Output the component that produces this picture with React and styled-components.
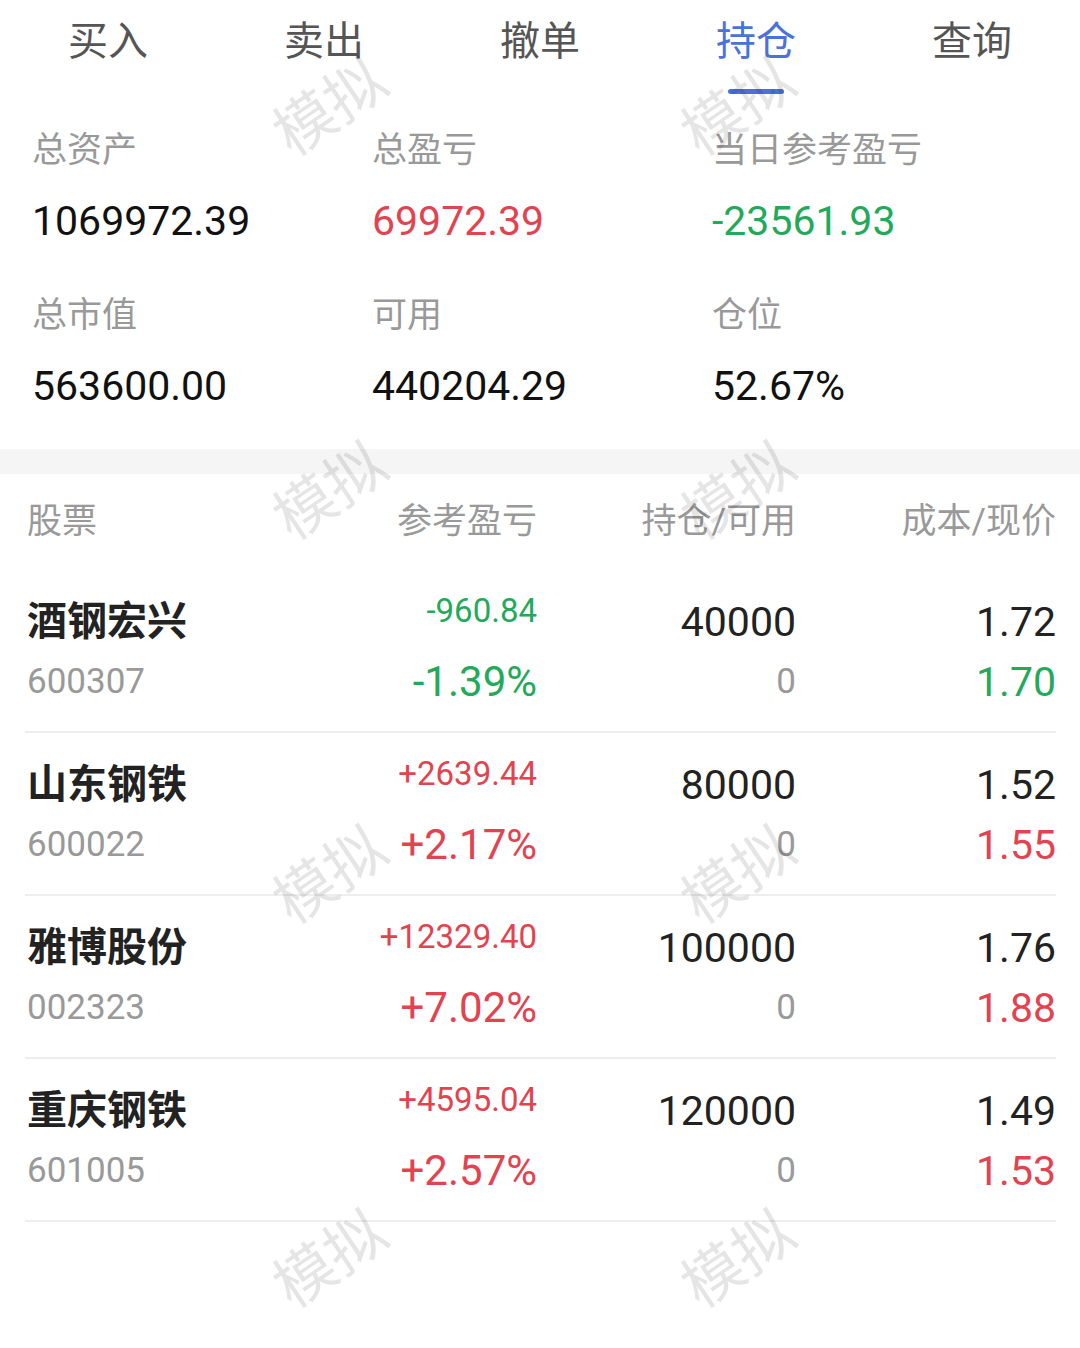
import React from "react";
import styled, { createGlobalStyle } from "styled-components";

const GlobalStyle = createGlobalStyle`
  body {
    margin: 0;
    background: #fff;
    font-family: Roboto, "Noto Sans CJK SC", sans-serif;
  }
`;

const RED = "#e2434f";
const GREEN = "#22a95a";
const BLUE = "#4a72d8";

const Page = styled.div`
  position: relative;
  width: 1080px;
  min-height: 1348px;
  overflow: hidden;
  background: #fff;
`;

const TabBar = styled.div`
  display: grid;
  grid-template-columns: repeat(5, 1fr);
  height: 100px;
`;

const Tab = styled.div`
  display: flex;
  flex-direction: column;
  align-items: center;
  padding-top: 18px;
  font-size: 40px;
  line-height: 48px;
  color: ${(p) => (p.active ? BLUE : "#555")};
`;

const Underline = styled.div`
  width: 56px;
  height: 5px;
  margin-top: 23px;
  border-radius: 3px;
  background: ${BLUE};
`;

const Summary = styled.div`
  display: grid;
  grid-template-columns: repeat(3, 340px);
  row-gap: 50px;
  padding: 31px 0 38px 32px;
`;

const Cell = styled.div`
  display: flex;
  flex-direction: column;
`;

const Label = styled.div`
  font-size: 35px;
  line-height: 40px;
  color: #999;
`;

const Value = styled.div`
  margin-top: 25px;
  font-size: 41px;
  line-height: 50px;
  color: ${(p) => p.color || "#111"};
`;

const Band = styled.div`
  height: 25px;
  background: #f5f5f5;
`;

const Table = styled.div`
  padding: 0 24px 0 25px;
`;

const Grid = styled.div`
  display: grid;
  grid-template-columns: 255px 257px 259px 1fr;
`;

const Head = styled(Grid)`
  height: 96px;
  align-items: center;
`;

const HeadCell = styled.div`
  font-size: 35px;
  line-height: 40px;
  color: #999;
  text-align: ${(p) => (p.left ? "left" : "right")};
  padding-left: ${(p) => (p.left ? "2px" : "0")};
`;

const Row = styled(Grid)`
  box-sizing: content-box;
  height: 134px;
  padding-top: 27px;
  border-bottom: 2px solid #eeeeee;
`;

const Col = styled.div`
  display: flex;
  flex-direction: column;
  align-items: ${(p) => (p.left ? "flex-start" : "flex-end")};
  padding-left: ${(p) => (p.left ? "2px" : "0")};
`;

const Name = styled.div`
  font-size: 40px;
  line-height: 50px;
  font-weight: 700;
  color: #222;
`;

const Top = styled.div`
  height: 50px;
  font-size: ${(p) => p.size || 41}px;
  line-height: ${(p) => (p.small ? "28px" : "50px")};
  color: ${(p) => p.color || "#222"};
`;

const Bottom = styled.div`
  margin-top: 13px;
  height: 44px;
  font-size: ${(p) => p.size || 35}px;
  line-height: 44px;
  color: ${(p) => p.color || "#999"};
`;

const Marks = styled.div`
  position: absolute;
  top: -90px;
  left: 123px;
  display: grid;
  grid-template-columns: repeat(2, 408px);
  grid-auto-rows: 384px;
  pointer-events: none;
`;

const Mark = styled.div`
  display: flex;
  align-items: center;
  justify-content: center;
  font-size: 60px;
  font-family: "Noto Sans CJK SC", sans-serif;
  color: rgba(0, 0, 0, 0.1);
  transform: rotate(-34deg);
`;

const tabs = ["买入", "卖出", "撤单", "持仓", "查询"];

const summary = [
  { label: "总资产", value: "1069972.39" },
  { label: "总盈亏", value: "69972.39", color: RED },
  { label: "当日参考盈亏", value: "-23561.93", color: GREEN },
  { label: "总市值", value: "563600.00" },
  { label: "可用", value: "440204.29" },
  { label: "仓位", value: "52.67%" },
];

const stocks = [
  { name: "酒钢宏兴", code: "600307", pnl: "-960.84", pct: "-1.39%", hold: "40000", avail: "0", cost: "1.72", price: "1.70", up: false },
  { name: "山东钢铁", code: "600022", pnl: "+2639.44", pct: "+2.17%", hold: "80000", avail: "0", cost: "1.52", price: "1.55", up: true },
  { name: "雅博股份", code: "002323", pnl: "+12329.40", pct: "+7.02%", hold: "100000", avail: "0", cost: "1.76", price: "1.88", up: true },
  { name: "重庆钢铁", code: "601005", pnl: "+4595.04", pct: "+2.57%", hold: "120000", avail: "0", cost: "1.49", price: "1.53", up: true },
];

export default function App() {
  return (
    <Page>
      <GlobalStyle />
      <TabBar>
        {tabs.map((t) => (
          <Tab key={t} active={t === "持仓"}>
            {t}
            {t === "持仓" && <Underline />}
          </Tab>
        ))}
      </TabBar>

      <Summary>
        {summary.map((s) => (
          <Cell key={s.label}>
            <Label>{s.label}</Label>
            <Value color={s.color}>{s.value}</Value>
          </Cell>
        ))}
      </Summary>

      <Band />

      <Table>
        <Head>
          <HeadCell left>股票</HeadCell>
          <HeadCell>参考盈亏</HeadCell>
          <HeadCell>持仓/可用</HeadCell>
          <HeadCell>成本/现价</HeadCell>
        </Head>
        {stocks.map((s) => {
          const c = s.up ? RED : GREEN;
          return (
            <Row key={s.code}>
              <Col left>
                <Name>{s.name}</Name>
                <Bottom>{s.code}</Bottom>
              </Col>
              <Col>
                <Top small size={33} color={c}>{s.pnl}</Top>
                <Bottom size={42} color={c}>{s.pct}</Bottom>
              </Col>
              <Col>
                <Top>{s.hold}</Top>
                <Bottom>{s.avail}</Bottom>
              </Col>
              <Col>
                <Top>{s.cost}</Top>
                <Bottom size={41} color={c}>{s.price}</Bottom>
              </Col>
            </Row>
          );
        })}
      </Table>

      <Marks>
        {Array.from({ length: 8 }).map((_, i) => (
          <Mark key={i}>模拟</Mark>
        ))}
      </Marks>
    </Page>
  );
}
